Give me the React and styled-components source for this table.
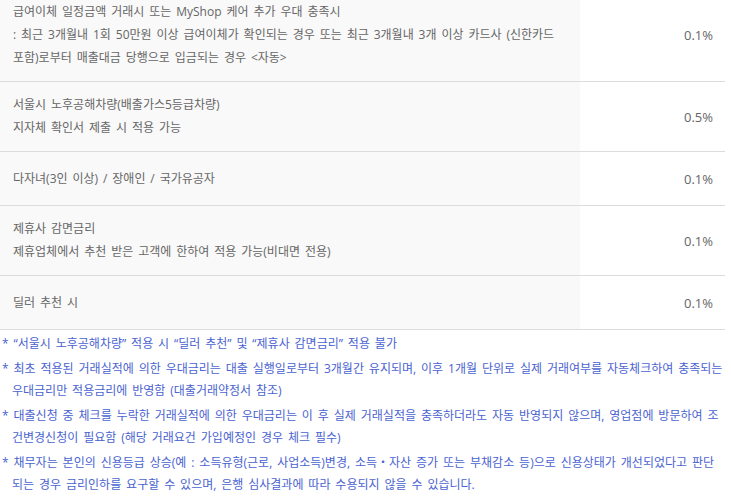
import React from "react";
import styled, { createGlobalStyle } from "styled-components";

const Global = createGlobalStyle`
  html, body { margin: 0; padding: 0; background: #fff; }
  body { font-family: "Open Sans", "Noto Sans CJK KR", sans-serif; }
`;

const Page = styled.div`
  width: 725px;
  margin-top: -11px;
`;

const Table = styled.table`
  width: 100%;
  border-collapse: collapse;
  table-layout: fixed;
`;

const Row = styled.tr`
  border-bottom: 1px solid #dcdcdc;
`;

const Cond = styled.td`
  width: 555px;
  height: 30px;
  padding: 11px 12px 12px 13px;
  background: #f9f9f9;
  color: #666;
  font-size: 12px;
  line-height: 23px;
  word-spacing: 1.8px;
  vertical-align: middle;
`;

const Line = styled.div`
  white-space: nowrap;
`;

const Rate = styled.td`
  padding: 0 12px 0 0;
  text-align: right;
  vertical-align: middle;
  color: #666;
  font-size: 13px;
`;

const Notes = styled.ul`
  list-style: none;
  margin: 3px 0 0;
  padding: 0;
`;

const Note = styled.li`
  color: #4a63d0;
  font-size: 12px;
  line-height: 22px;
  word-spacing: 1.8px;
  padding-left: 12px;
  text-indent: -10px;
  margin-bottom: 3px;
`;

const rows = [
  {
    lines: [
      "급여이체 일정금액 거래시 또는 MyShop 케어 추가 우대 충족시",
      ": 최근 3개월내 1회 50만원 이상 급여이체가 확인되는 경우 또는 최근 3개월내 3개 이상 카드사 (신한카드",
      "포함)로부터 매출대금 당행으로 입금되는 경우 <자동>",
    ],
    rate: "0.1%",
  },
  { lines: ["서울시 노후공해차량(배출가스5등급차량)", "지자체 확인서 제출 시 적용 가능"], rate: "0.5%" },
  { lines: ["다자녀(3인 이상) / 장애인 / 국가유공자"], rate: "0.1%" },
  { lines: ["제휴사 감면금리", "제휴업체에서 추천 받은 고객에 한하여 적용 가능(비대면 전용)"], rate: "0.1%" },
  { lines: ["딜러 추천 시"], rate: "0.1%" },
];

const notes = [
  "* “서울시 노후공해차량” 적용 시 “딜러 추천” 및 “제휴사 감면금리” 적용 불가",
  "* 최초 적용된 거래실적에 의한 우대금리는 대출 실행일로부터 3개월간 유지되며, 이후 1개월 단위로 실제 거래여부를 자동체크하여 충족되는 우대금리만 적용금리에 반영함 (대출거래약정서 참조)",
  "* 대출신청 중 체크를 누락한 거래실적에 의한 우대금리는 이 후 실제 거래실적을 충족하더라도 자동 반영되지 않으며, 영업점에 방문하여 조건변경신청이 필요함 (해당 거래요건 가입예정인 경우 체크 필수)",
  "* 채무자는 본인의 신용등급 상승(예 : 소득유형(근로, 사업소득)변경, 소득・자산 증가 또는 부채감소 등)으로 신용상태가 개선되었다고 판단되는 경우 금리인하를 요구할 수 있으며, 은행 심사결과에 따라 수용되지 않을 수 있습니다.",
];

export default function App() {
  return (
    <>
      <Global />
      <Page>
        <Table>
          <tbody>
            {rows.map((r, i) => (
              <Row key={i}>
                <Cond>
                  {r.lines.map((l, j) => (
                    <Line key={j}>{l}</Line>
                  ))}
                </Cond>
                <Rate>{r.rate}</Rate>
              </Row>
            ))}
          </tbody>
        </Table>
        <Notes>
          {notes.map((n, i) => (
            <Note key={i}>{n}</Note>
          ))}
        </Notes>
      </Page>
    </>
  );
}
